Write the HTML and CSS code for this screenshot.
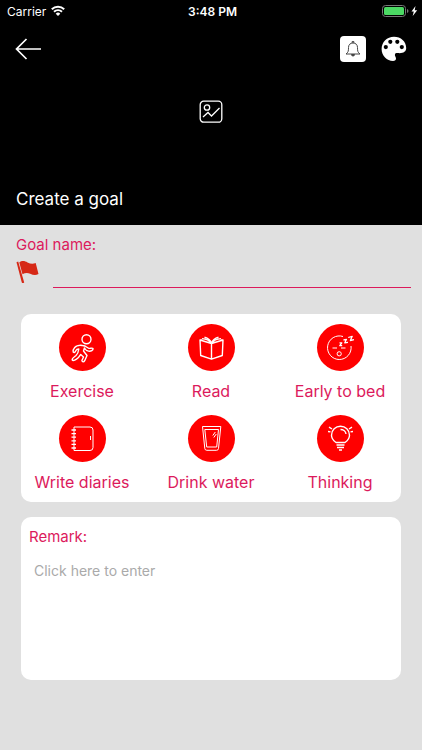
FILE: index.html
```html
<!DOCTYPE html>
<html lang="en">
<head>
<meta charset="utf-8">
<meta name="viewport" content="width=device-width, initial-scale=1">
<title>Create a goal</title>
<link rel="stylesheet" href="styles.css">
</head>
<body>
<header class="header">
  <div class="status">
    <div class="status-left">
      <span>Carrier</span>
      <svg width="14" height="12" viewBox="0 0 14 12" fill="none" stroke="#fff" stroke-width="2"><path d="M.8 4.2a9 9 0 0 1 12.4 0M3 6.8a6 6 0 0 1 8 0"/><path d="M7 11 4.7 8.7a3.3 3.3 0 0 1 4.6 0Z" fill="#fff" stroke="none"/></svg>
    </div>
    <span class="time">3:48 PM</span>
    <div class="status-right">
      <svg width="36" height="12" viewBox="0 0 36 12"><rect x=".5" y=".5" width="23" height="11" rx="3" fill="none" stroke="#777"/><rect x="2" y="2" width="20" height="8" rx="1.5" fill="#4cd964"/><path d="M25 4v4q1.500-.5 1.500-2T25 4Z" fill="#777"/><path d="m33.500 1-4 5.500h2.300L30.700 11l4.500-5.700h-2.500Z" fill="#fff"/></svg>
    </div>
  </div>
  <nav class="nav">
    <button class="icon-button" type="button" aria-label="Back">
      <svg width="28" height="24" viewBox="0 0 28 24" fill="none" stroke="#fff" stroke-width="1.700"><path d="M26 12H1.500M11.500 2l-10 10 10 10"/></svg>
    </button>
    <div class="nav-actions">
      <button class="icon-button bell" type="button" aria-label="Reminder">
        <svg width="18" height="18" viewBox="0 0 18 18" fill="none" stroke="#444" stroke-width="1"><path d="M2 14c2.300-1.700 2.500-3 2.500-6.500C4.500 4.700 6.300 3 9 3s4.500 1.700 4.500 4.500c0 3.500.2 4.800 2.500 6.500ZM8.200 3V1.500h1.600V3"/><path d="M7.500 14.500a1.500 1.500 0 0 0 3 0Z" fill="#444"/></svg>
      </button>
      <button class="icon-button" type="button" aria-label="Theme colour">
        <svg width="26" height="26" viewBox="0 0 26 26"><path d="M13 .8C6 .8.600 6.200.600 13c0 6.700 5.400 12 11.400 12 2 0 3-1 3-2.500 0-1.700-1.300-2.200-1.100-3.800.2-1.300 1.300-1.700 3-1.600 4.800.5 8.300-1 8.300-5C25.200 5.400 19.800.8 13 .8Z" fill="#fff"/><circle cx="9.300" cy="5.800" r="2.100"/><circle cx="16.300" cy="5.800" r="2.100"/><circle cx="4.800" cy="11.100" r="2.100"/><circle cx="20.800" cy="11.100" r="2.100"/></svg>
      </button>
    </div>
  </nav>
  <button class="icon-button cover" type="button" aria-label="Choose a cover picture">
    <svg width="24" height="24" viewBox="0 0 24 24" fill="none" stroke="#fff" stroke-width="1.300"><rect x="1.200" y="1.200" width="21.600" height="21" rx="3.500"/><circle cx="8" cy="7.500" r="2.700"/><path d="m4 17 5-4.500 3.500 3.500L20.500 8"/></svg>
  </button>
  <h1 class="title">Create a goal</h1>
</header>
<main>
  <section class="goal">
    <label class="caption" for="goal-name">Goal name:</label>
    <div class="goal-row">
      <svg width="24" height="24" viewBox="0 0 24 24" fill="#d62816"><path d="m.500 1.300 1.700-.7L8.200 21.400q-1.500 1.300-2.400.2Z"/><path d="M3.300 1.500C6-.8 9 0 11.500 1.500c3 1.400 5.500 1.600 8.200.5L22.500 13c-3 1.600-5.500.9-8.300-.3-2.700-1-5.200-.9-7.700.6Z"/></svg>
      <input class="goal-input" id="goal-name" type="text">
    </div>
  </section>
  <section class="card presets">
    <button class="preset" type="button">
      <svg class="disc" viewBox="0 0 47 47"><circle cx="27.500" cy="15.300" r="4.500"/><path d="M23.500 21.500c-3-.7-6.500.5-7.800 2-1.100 1.300-1.900 3.300-1.500 4.500.9 1 2 .2 2.600-1.200.6-1.400 1.700-1.800 3-1.800-.3 3-1.200 5-3 6.800-2 1.500-4 2.500-3.600 4.200.9 1.500 4-.3 6-2.200l2.500-3.300 2.800 2.500-1.600 3.500c.3 1.800 2 1.700 2.800.2l2.300-5.200-3.500-4.500.9-3c1 1.800 2.200 2.800 4.200 3.100 2.500.4 4.700-.8 4.400-2.600-.9-1-2.800.4-4.500-.3-1.900-.9-2.600-2.300-6-2.700Z"/></svg>
      <span>Exercise</span>
    </button>
    <button class="preset" type="button">
      <svg class="disc" viewBox="0 0 47 47"><path d="M14 16h-2l.7 15.500L23.500 35.200l10.800-3.700L35 16h-2M23.500 19.500v15.700M23.500 19.500 12 16M23.500 19.500c-2-3-5.500-4.700-9.500-4.900M23.500 19.500c-1-3.500-3.500-5.500-7-6.300M23.500 19.500 35 16M23.500 19.500c2-3 5.500-4.700 9.500-4.900M23.500 19.500c1-3.500 3.500-5.500 7-6.300"/></svg>
      <span>Read</span>
    </button>
    <button class="preset" type="button">
      <svg class="disc fine" viewBox="0 0 47 47"><path d="M26 12.500a11.800 11.800 0 1 0 8 9.500M15.500 24h4.500M24 24h4.500"/><circle cx="22.200" cy="29.800" r="2.100"/><path class="bold" d="M22.500 18.800h2.300l-2 2.800h2.400M26.500 16l3-.7-1.700 3.500 3.200-.4M31.200 13.500l4-1.200-1.800 4.200 3.600-.8"/></svg>
      <span>Early to bed</span>
    </button>
    <button class="preset" type="button">
      <svg class="disc fine" viewBox="0 0 47 47"><path d="M15 12h16a3 3 0 0 1 3 3v17.500a3 3 0 0 1-3 3H15ZM31.500 21v4"/><path class="bold" d="M12.500 15H17M12.500 18.600H17M12.500 22.200H17M12.500 25.800H17M12.500 29.400H17M12.500 33H17"/></svg>
      <span>Write diaries</span>
    </button>
    <button class="preset" type="button">
      <svg class="disc fine" viewBox="0 0 47 47"><path d="M14.500 11.500h18.300l-2.300 22a2 2 0 0 1-2 1.800h-9.700a2 2 0 0 1-2-1.800ZM16.800 14.500h13.700L28.700 32h-10ZM24.800 20.500l2.500-3.500M25.800 22.500l2.500-3.500"/></svg>
      <span>Drink water</span>
    </button>
    <button class="preset" type="button">
      <svg class="disc" viewBox="0 0 47 47"><path d="M19 27.500c-2.800-2-4.500-4.200-4.500-7.300a9 9 0 0 1 18 0c0 3.100-1.700 5.300-4.500 7.300ZM23.500 14.500c3 0 5.300 2 5.500 4.500M19.500 30h8M20 32.500h7M22 35h3M12 12.200l3 1.800M11 16.500l2.500.4M35 12.200l-3 1.800M36 16.500l-2.500.4"/></svg>
      <span>Thinking</span>
    </button>
  </section>
  <section class="card remark">
    <label class="caption" for="remark">Remark:</label>
    <textarea class="remark-input" id="remark" placeholder="Click here to enter"></textarea>
  </section>
</main>
</body>
</html>
```

FILE: styles.css
```css
* {
  box-sizing: border-box;
}

body {
  margin: 0;
  min-height: 100vh;
  background: #e0e0e0;
  color: #dc1a5c;
  font-family: Inter, "Liberation Sans", sans-serif;
}

svg {
  display: block;
}

button,
input,
textarea {
  font: inherit;
  color: inherit;
  border: 0;
  padding: 0;
  margin: 0;
  background: none;
}

.header {
  display: flex;
  flex-direction: column;
  background: #000;
  color: #fff;
}

.status {
  display: grid;
  grid-template-columns: 1fr auto 1fr;
  align-items: center;
  height: 22px;
  padding: 0 4px 0 7px;
  font-size: 12px;
}

.status-left {
  display: flex;
  align-items: center;
  gap: 5px;
}

.status-right {
  justify-self: end;
}

.time {
  font-weight: 600;
}

.nav {
  display: flex;
  justify-content: space-between;
  align-items: center;
  height: 54px;
  padding: 0 15px;
}

.nav-actions {
  display: flex;
  align-items: center;
  gap: 15px;
}

.icon-button {
  cursor: pointer;
}

.bell {
  padding: 4px;
  border-radius: 4px;
  background: #fff;
}

.cover {
  align-self: center;
  margin-top: 24px;
}

.title {
  margin: 0;
  padding: 63px 16px 14px;
  font-size: 17px;
  font-weight: 400;
  line-height: 24px;
}

.caption {
  display: block;
  font-size: 15px;
  line-height: 20px;
}

.goal {
  padding: 10px 11px 0 16px;
}

.goal-row {
  display: flex;
  align-items: flex-start;
  gap: 13px;
  padding-top: 6px;
}

.goal-input {
  flex: 1;
  min-width: 0;
  height: 27px;
  border-bottom: 1px solid #dc1a5c;
  outline: none;
}

.card {
  margin: 0 21px;
  border-radius: 10px;
  background: #fff;
}

.presets {
  display: grid;
  grid-template-columns: repeat(3, 1fr);
  gap: 10px 33px;
  margin-top: 26px;
  padding: 10px 13px 6px;
}

.preset {
  display: flex;
  flex-direction: column;
  align-items: center;
  gap: 7px;
  font-size: 16px;
  line-height: 27px;
  white-space: nowrap;
  cursor: pointer;
}

.disc {
  width: 47px;
  height: 47px;
  border-radius: 50%;
  background: #f00;
  fill: none;
  stroke: #fff;
  stroke-width: 1.4;
  stroke-linejoin: round;
}

.fine {
  stroke-width: 1;
}

.bold {
  stroke-width: 1.3;
}

.remark {
  margin-top: 15px;
  padding: 10px 8px 8px;
}

.remark-input {
  display: block;
  width: 100%;
  height: 125px;
  padding: 14px 5px 0;
  font-size: 14px;
  line-height: 20px;
  resize: none;
  outline: none;
}

.remark-input::placeholder {
  color: #aaa;
  opacity: 1;
}
```
